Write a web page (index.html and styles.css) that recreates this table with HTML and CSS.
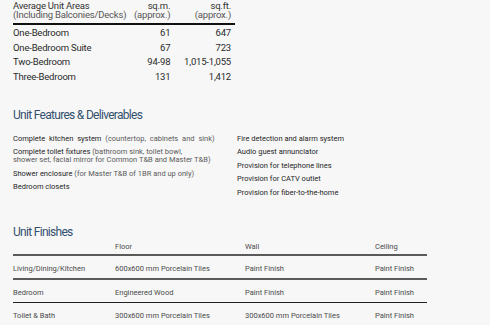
FILE: index.html
```html
<!DOCTYPE html>
<html>
<head>
    <meta charset="utf-8" />
    <title>Unit Specifications</title>
    <link rel="stylesheet" href="styles.css">
</head>
<body>
    <table class="areas">
        <thead>
            <tr>
                <th class="area-name">Average Unit Areas<br><span class="sub">(Including Balconies/Decks)</span></th>
                <th class="num">sq.m.<br><span class="sub">(approx.)</span></th>
                <th class="num">sq.ft.<br><span class="sub">(approx.)</span></th>
            </tr>
        </thead>
        <tbody>
            <tr><td>One-Bedroom</td><td class="num">61</td><td class="num">647</td></tr>
            <tr><td>One-Bedroom Suite</td><td class="num">67</td><td class="num">723</td></tr>
            <tr><td>Two-Bedroom</td><td class="num">94-98</td><td class="num">1,015-1,055</td></tr>
            <tr><td>Three-Bedroom</td><td class="num">131</td><td class="num">1,412</td></tr>
        </tbody>
    </table>

    <h2 class="section-title features-title">Unit Features &amp; Deliverables</h2>
    <div class="features">
        <ul class="feature-list left">
            <li class="justified">Complete kitchen system <span class="note">(countertop, cabinets and sink)</span></li>
            <li>Complete toilet fixtures <span class="note">(bathroom sink, toilet bowl,<br>shower set, facial mirror for Common T&amp;B and Master T&amp;B)</span></li>
            <li>Shower enclosure <span class="note">(for Master T&amp;B of 1BR and up only)</span></li>
            <li>Bedroom closets</li>
        </ul>
        <ul class="feature-list right">
            <li>Fire detection and alarm system</li>
            <li>Audio guest annunciator</li>
            <li>Provision for telephone lines</li>
            <li>Provision for CATV outlet</li>
            <li>Provision for fiber-to-the-home</li>
        </ul>
    </div>

    <h2 class="section-title finishes-title">Unit Finishes</h2>
    <table class="finishes">
        <thead>
            <tr><th class="room"></th><th class="floor">Floor</th><th class="wall">Wall</th><th>Ceiling</th></tr>
        </thead>
        <tbody>
            <tr><td>Living/Dining/Kitchen</td><td>600x600 mm Porcelain Tiles</td><td>Paint Finish</td><td>Paint Finish</td></tr>
            <tr><td>Bedroom</td><td>Engineered Wood</td><td>Paint Finish</td><td>Paint Finish</td></tr>
            <tr class="last"><td>Toilet &amp; Bath</td><td>300x600 mm Porcelain Tiles</td><td>300x600 mm Porcelain Tiles</td><td>Paint Finish</td></tr>
        </tbody>
    </table>
</body>
</html>
```

FILE: styles.css
```css
body {
    margin: 0;
    padding: 1px 13px 0 13px;
    background-color: #f7f7f7;
    font-family: Roboto, "Liberation Sans", Arial, sans-serif;
    color: #2a2a2a;
}

/* areas table */
.areas {
    width: 222px;
    border-collapse: collapse;
    font-size: 9.5px;
    letter-spacing: -0.2px;
}

.areas th {
    font-weight: normal;
    text-align: left;
    white-space: nowrap;
    color: #333;
    line-height: 9px;
    padding: 0 0 4px 0;
    vertical-align: bottom;
    border-bottom: 2px solid #111;
}

.areas .sub {
    color: #555;
}

.areas td {
    height: 14.7px;
    padding: 0;
    vertical-align: middle;
}

.areas .num {
    text-align: right;
    padding-right: 4px;
}

.areas .area-name {
    width: 110px;
}

/* section titles */
.section-title {
    margin: 0;
    font-weight: normal;
    font-size: 12px;
    letter-spacing: -0.7px;
    color: #33506f;
}

.features-title {
    margin-top: 24px;
}

.finishes-title {
    margin-top: 23px;
}

/* features */
.features {
    display: grid;
    grid-template-columns: 212px 1fr;
    column-gap: 12px;
    margin-top: 13px;
    font-size: 7.5px;
}

.feature-list {
    list-style: none;
    margin: 0;
    padding: 0;
}

.feature-list li {
    line-height: 8px;
    margin-bottom: 5.5px;
    color: #1e1e1e;
}

.feature-list .note {
    color: #5a5a5a;
}

.feature-list .justified {
    word-spacing: 2px;
}

/* finishes table */
.finishes {
    width: 414px;
    margin-top: 3px;
    border-collapse: collapse;
    font-size: 7.5px;
    color: #4a4a4a;
}

.finishes th {
    font-weight: normal;
    text-align: left;
    padding: 0 0 3px 0;
    border-bottom: 2px solid #5a5a5a;
}

.finishes td {
    padding: 3px 0 0 0;
    height: 19px;
    vertical-align: middle;
    border-bottom: 2px solid #5a5a5a;
}

.finishes .last td {
    border-bottom: none;
}

.finishes tbody tr:nth-child(2) td {
    border-bottom: 1.5px solid #222;
}

.finishes .room {
    width: 102px;
}

.finishes .floor,
.finishes .wall {
    width: 130px;
}
```
